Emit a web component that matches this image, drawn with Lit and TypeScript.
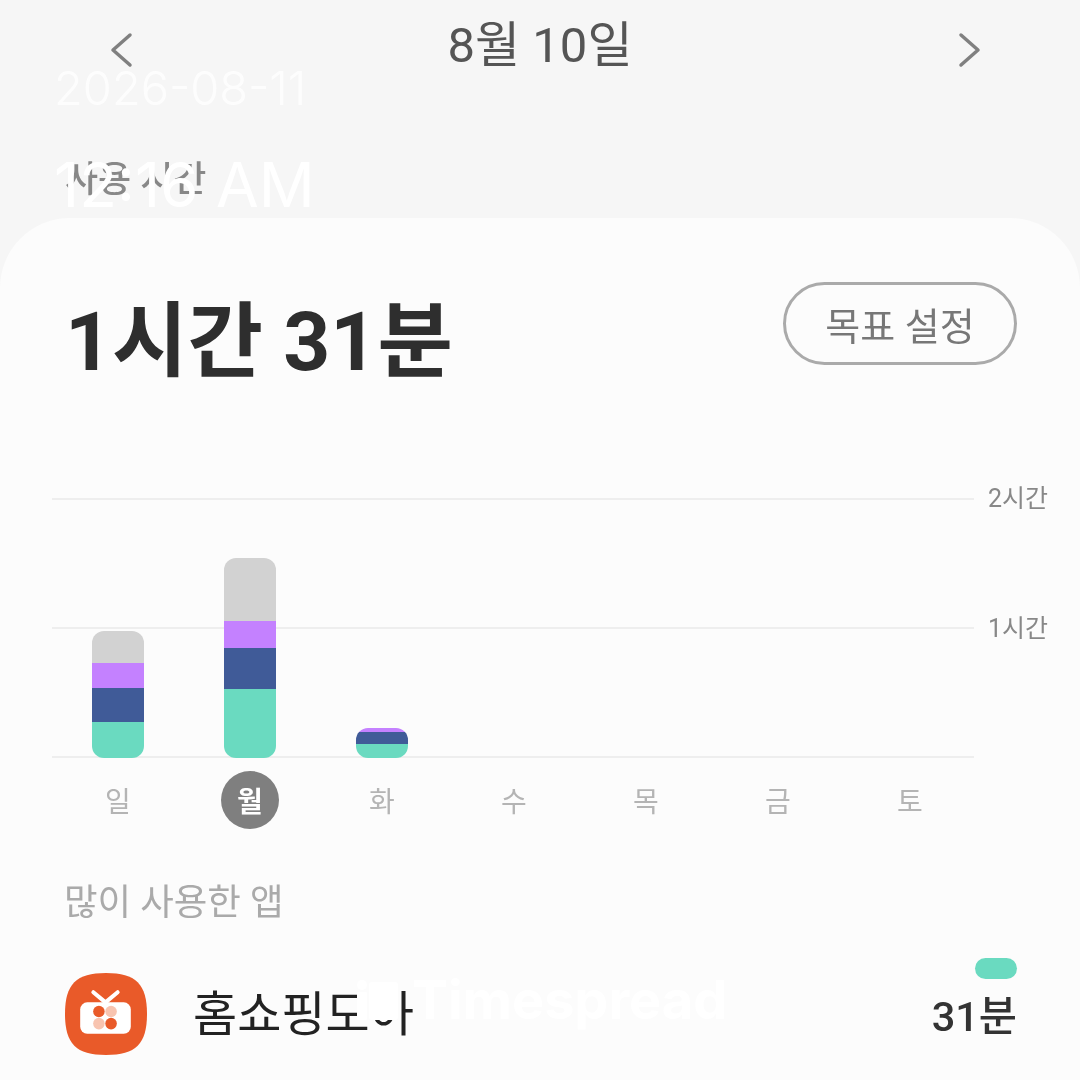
import { LitElement, html, css } from 'lit';
import { customElement } from 'lit/decorators.js';

// segment colours are bottom to top in the stack
const TEAL = '#6adac0';
const BLUE = '#405b98';
const PURPLE = '#c481ff';
const GREY = '#d2d2d2';

const DAYS = [
  { label: '일', segs: [[TEAL, 36], [BLUE, 34], [PURPLE, 25], [GREY, 32]] },
  { label: '월', active: true, segs: [[TEAL, 69], [BLUE, 41], [PURPLE, 27], [GREY, 63]] },
  { label: '화', segs: [[TEAL, 14], [BLUE, 12], [PURPLE, 4]] },
  { label: '수', segs: [] },
  { label: '목', segs: [] },
  { label: '금', segs: [] },
  { label: '토', segs: [] },
];

@customElement('app-root')
export class AppRoot extends LitElement {
  static styles = css`
    :host {
      display: block;
      position: relative;
      width: 1080px;
      height: 1080px;
      overflow: hidden;
      background: #f6f6f6;
      font-family: Roboto, 'Noto Sans CJK KR', sans-serif;
      color: #333;
    }
    /* the reference is an upscaled capture, soft everywhere but the stamps */
    .screen {
      filter: blur(0.7px);
    }
    .header {
      height: 90px;
      padding: 0 90px 0 100px;
      box-sizing: border-box;
      display: flex;
      align-items: center;
      justify-content: space-between;
    }
    .header svg {
      display: block;
      margin-top: 8px;
    }
    .date {
      font-size: 49px;
      color: #555;
      line-height: 90px;
      margin-right: 10px;
      padding-top: 1px;
    }
    .section {
      height: 128px;
      box-sizing: border-box;
      padding: 70px 0 0 65px;
      font-size: 36px;
      line-height: 40px;
      color: #888;
      font-weight: 500;
    }
    .card {
      height: 862px;
      background: #fcfcfc;
      border-radius: 70px 70px 0 0;
      overflow: hidden;
    }
    .top {
      display: flex;
      justify-content: space-between;
      align-items: flex-start;
      padding: 64px 63px 0 65px;
      height: 216px;
      box-sizing: border-box;
    }
    .total {
      font-size: 82px;
      line-height: 100px;
      font-weight: 700;
      color: #2e2e2e;
      margin-top: 10px;
    }
    .goal {
      width: 234px;
      height: 83px;
      box-sizing: border-box;
      border: 3px solid #aaa;
      border-radius: 42px;
      display: flex;
      align-items: center;
      justify-content: center;
      font-size: 38px;
      color: #777;
    }
    .chart {
      display: flex;
      padding-left: 52px;
      margin-top: 64px;
    }
    .plot {
      display: grid;
      grid-template-columns: 922px;
      height: 260px;
    }
    .lines,
    .bars {
      grid-area: 1 / 1;
    }
    .lines {
      display: flex;
      flex-direction: column;
      justify-content: space-between;
    }
    .lines i {
      display: block;
      height: 2px;
      background: #eeeeee;
    }
    .bars {
      display: grid;
      grid-template-columns: repeat(7, 132px);
      align-items: end;
      justify-items: center;
    }
    .bar {
      width: 52px;
      display: flex;
      flex-direction: column-reverse;
      border-radius: 12px;
      overflow: hidden;
    }
    .axis {
      margin-left: 14px;
      font-size: 25px;
      line-height: 30px;
      color: #888;
      margin-top: -14px;
    }
    .axis div {
      height: 130px;
    }
    .days {
      display: grid;
      grid-template-columns: repeat(7, 132px);
      padding-left: 52px;
      margin-top: 13px;
      justify-items: center;
    }
    .day {
      width: 58px;
      height: 58px;
      display: flex;
      align-items: center;
      justify-content: center;
      font-size: 28px;
      color: #b4b4b4;
    }
    .day.active {
      background: #7f7f7f;
      color: #fff;
      border-radius: 50%;
      font-weight: 700;
    }
    .sub {
      padding-left: 64px;
      margin-top: 50px;
      font-size: 36.5px;
      line-height: 48px;
      color: #aaa;
    }
    .app {
      display: flex;
      align-items: center;
      padding: 0 63px 0 65px;
      margin-top: 23px;
      height: 106px;
    }
    .app svg {
      display: block;
      margin-top: 22px;
    }
    .name {
      margin-left: 46px;
      margin-top: 14px;
      font-size: 48px;
      color: #222;
      flex: 1;
    }
    .usage {
      display: flex;
      flex-direction: column;
      align-items: flex-end;
      gap: 13px;
      margin-bottom: 7px;
    }
    .pill {
      width: 42px;
      height: 21px;
      border-radius: 11px;
      background: #6adac0;
    }
    .mins {
      font-size: 41.5px;
      line-height: 50px;
      font-weight: 500;
      color: #333;
    }
    .stamp,
    .mark {
      position: absolute;
      color: #fff;
      white-space: nowrap;
      font-family: Inter, sans-serif;
    }
    .stamp {
      left: 54px;
    }
    .stamp.d {
      top: 60px;
      font-size: 47px;
      line-height: 56px;
      font-weight: 300;
      opacity: 0.85;
    }
    .stamp.t {
      top: 148px;
      font-size: 62px;
      line-height: 74px;
      font-weight: 400;
    }
    .mark {
      left: 356px;
      top: 970px;
      display: flex;
      align-items: center;
      gap: 14px;
      font-size: 54px;
      line-height: 60px;
      font-weight: 700;
    }
    .mark svg {
      display: block;
    }
  `;

  render() {
    return html`
      <div class="screen">
        <div class="header">
          <svg width="44" height="44" viewBox="0 0 44 44" fill="none" stroke="#808080" stroke-width="3.5" stroke-linecap="round" stroke-linejoin="round">
            <path d="M30 8 13 23 30 38" />
          </svg>
          <div class="date">8월 10일</div>
          <svg width="44" height="44" viewBox="0 0 44 44" fill="none" stroke="#808080" stroke-width="3.5" stroke-linecap="round" stroke-linejoin="round">
            <path d="M15 8 32 23 15 38" />
          </svg>
        </div>
        <div class="section">사용 시간</div>
        <div class="card">
          <div class="top">
            <div class="total">1시간 31분</div>
            <div class="goal">목표 설정</div>
          </div>
          <div class="chart">
            <div class="plot">
              <div class="lines"><i></i><i></i><i></i></div>
              <div class="bars">
                ${DAYS.map(
                  (d) => html`<div class="bar">
                    ${d.segs.map((s) => html`<div style="background:${s[0]};height:${s[1]}px"></div>`)}
                  </div>`
                )}
              </div>
            </div>
            <div class="axis">
              <div>2시간</div>
              <div>1시간</div>
            </div>
          </div>
          <div class="days">
            ${DAYS.map((d) => html`<div class="day ${d.active ? 'active' : ''}">${d.label}</div>`)}
          </div>
          <div class="sub">많이 사용한 앱</div>
          <div class="app">
            <svg width="82" height="82" viewBox="0 0 81 81">
              <path d="M40.5 0C70 0 81 11 81 40.5 81 70 70 81 40.5 81 11 81 0 70 0 40.5 0 11 11 0 40.5 0Z" fill="#e95a29" />
              <path d="M28 19 40 29 52 19" fill="none" stroke="#fff" stroke-width="4" stroke-linecap="round" stroke-linejoin="round" />
              <rect x="15" y="29" width="50" height="31" rx="7" fill="#fff" />
              <circle cx="33.5" cy="38" r="5.7" fill="#e95a29" />
              <circle cx="45.5" cy="38" r="5.7" fill="#f8c4b0" />
              <circle cx="33.5" cy="50" r="5.7" fill="#f8c4b0" />
              <circle cx="45.5" cy="50" r="5.7" fill="#e95a29" />
            </svg>
            <div class="name">홈쇼핑모아</div>
            <div class="usage">
              <div class="pill"></div>
              <div class="mins">31분</div>
            </div>
          </div>
        </div>
      </div>
      <div class="stamp d">2026-08-11</div>
      <div class="stamp t">12:16 AM</div>
      <div class="mark">
        <svg width="42" height="40" viewBox="0 0 42 40" fill="#fff">
          <circle cx="6" cy="5" r="5" />
          <rect x="1" y="12" width="10" height="28" rx="1" />
          <rect x="13" y="2" width="29" height="38" rx="3" />
        </svg>
        <span>Timespread</span>
      </div>
    `;
  }
}
